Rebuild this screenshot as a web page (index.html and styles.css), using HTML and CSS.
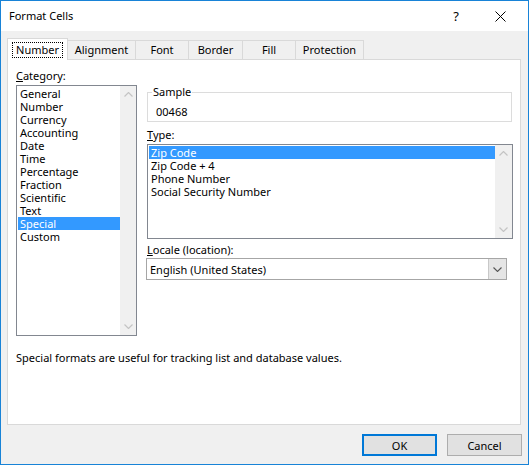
FILE: index.html
```html
<!DOCTYPE html>
<html>
<head>
<meta charset="utf-8">
<link rel="stylesheet" href="styles.css">
</head>
<body>
<div class="window">
  <div class="titlebar">
    <span class="title">Format Cells</span>
    <span class="spacer"></span>
    <div class="tbtn help">?</div>
    <div class="tbtn close">
      <svg width="11" height="11" viewBox="0 0 11 11"><path d="M0.5 0.5 L10.5 10.5 M10.5 0.5 L0.5 10.5" stroke="#000" stroke-width="1" fill="none"/></svg>
    </div>
  </div>
  <div class="body">
    <div class="tabs">
      <div class="tab active t-number"><span class="focus">Number</span></div>
      <div class="tab t-align">Alignment</div>
      <div class="tab t-font">Font</div>
      <div class="tab t-border">Border</div>
      <div class="tab t-fill">Fill</div>
      <div class="tab t-prot">Protection</div>
    </div>
    <div class="panel">
      <div class="cols">
        <div class="left">
          <div class="label"><u>C</u>ategory:</div>
          <div class="listbox cat">
            <div class="items">
              <div class="item">General</div>
              <div class="item">Number</div>
              <div class="item">Currency</div>
              <div class="item">Accounting</div>
              <div class="item">Date</div>
              <div class="item">Time</div>
              <div class="item">Percentage</div>
              <div class="item">Fraction</div>
              <div class="item">Scientific</div>
              <div class="item">Text</div>
              <div class="item sel">Special</div>
              <div class="item">Custom</div>
            </div>
            <div class="scroll s16">
              <div class="arrow"><svg width="9" height="5" viewBox="0 0 9 5"><polyline points="0.5,4.5 4.5,0.5 8.5,4.5" fill="none" stroke="#c4c4c4" stroke-width="1.2"/></svg></div>
              <div class="arrow"><svg width="9" height="5" viewBox="0 0 9 5"><polyline points="0.5,0.5 4.5,4.5 8.5,0.5" fill="none" stroke="#c4c4c4" stroke-width="1.2"/></svg></div>
            </div>
          </div>
        </div>
        <div class="right">
          <fieldset class="sample">
            <legend>Sample</legend>
            <div class="sample-val">00468</div>
          </fieldset>
          <div class="label gap5"><u>T</u>ype:</div>
          <div class="listbox type">
            <div class="items">
              <div class="item sel">Zip Code</div>
              <div class="item">Zip Code + 4</div>
              <div class="item">Phone Number</div>
              <div class="item">Social Security Number</div>
            </div>
            <div class="scroll s17">
              <div class="arrow"><svg width="9" height="5" viewBox="0 0 9 5"><polyline points="0.5,4.5 4.5,0.5 8.5,4.5" fill="none" stroke="#c4c4c4" stroke-width="1.2"/></svg></div>
              <div class="arrow"><svg width="9" height="5" viewBox="0 0 9 5"><polyline points="0.5,0.5 4.5,4.5 8.5,0.5" fill="none" stroke="#c4c4c4" stroke-width="1.2"/></svg></div>
            </div>
          </div>
          <div class="label gap3"><u>L</u>ocale (location):</div>
          <div class="combo">
            <span class="combo-text">English (United States)</span>
            <div class="combo-btn"><svg width="9" height="5" viewBox="0 0 9 5"><polyline points="0.5,0.5 4.5,4.5 8.5,0.5" fill="none" stroke="#555" stroke-width="1.1"/></svg></div>
          </div>
        </div>
      </div>
      <div class="desc">Special formats are useful for tracking list and database values.</div>
    </div>
    <div class="buttons">
      <button class="btn default">OK</button>
      <button class="btn">Cancel</button>
    </div>
  </div>
</div>
</body>
</html>
```

FILE: styles.css
```css
html, body {
  margin: 0;
  padding: 0;
  background: #fff;
}

.window {
  width: 529px;
  height: 465px;
  box-sizing: border-box;
  border: 1px solid #1883d7;
  background: #f0f0f0;
  display: flex;
  flex-direction: column;
  font-family: "Noto Sans", "Open Sans", sans-serif;
  font-size: 11px;
  color: #000;
}

.titlebar {
  height: 30px;
  background: #fff;
  display: flex;
  align-items: center;
  padding-left: 8px;
  padding-right: 6px;
  flex: none;
}

.title {
  font-size: 11px;
  line-height: 14px;
}

.spacer { flex: 1; }

.tbtn {
  width: 44px;
  height: 30px;
  display: flex;
  align-items: center;
  justify-content: center;
}

.help {
  font-size: 13px;
}

.body {
  flex: 1;
  display: flex;
  flex-direction: column;
  padding: 7px 7px 0 6px;
}

.tabs {
  display: flex;
  align-items: flex-end;
  height: 21px;
  flex: none;
}

.tab {
  box-sizing: border-box;
  height: 19px;
  border: 1px solid #d9d9d9;
  border-bottom: none;
  background: #f0f0f0;
  margin-left: -1px;
  display: flex;
  align-items: center;
  justify-content: center;
  line-height: 14px;
}

.tab.active {
  height: 22px;
  margin-left: 0;
  margin-bottom: -1px;
  background: #fff;
  position: relative;
  z-index: 1;
}

.focus {
  border: 1px dotted #000;
  padding: 0 3px;
  line-height: 14px;
}

.t-number { width: 61px; }
.t-align { width: 69px; }
.t-font { width: 54px; }
.t-border { width: 55px; }
.t-fill { width: 54px; }
.t-prot { width: 69px; }

.panel {
  box-sizing: border-box;
  height: 366px;
  background: #fff;
  border: 1px solid #d9d9d9;
  padding: 8px 0 0 8px;
  flex: none;
}

.cols {
  display: flex;
  gap: 10px;
}

.left {
  width: 121px;
}

.right {
  width: 366px;
}

.label {
  line-height: 15px;
  height: 15px;
}

.gap5 { margin-top: 5px; }
.gap3 { margin-top: 3px; }

.listbox {
  box-sizing: border-box;
  border: 1px solid #828790;
  display: flex;
  background: #fff;
  margin-top: 2px;
}

.listbox.cat {
  width: 121px;
  height: 251px;
}

.listbox.type {
  width: 366px;
  height: 95px;
}

.items {
  flex: 1;
  padding: 1px 0 0 1px;
}

.item {
  height: 13px;
  line-height: 13px;
  padding-left: 2px;
  white-space: nowrap;
}

.item.sel {
  background: #3399ff;
  color: #fff;
}

.scroll {
  background: #f0f0f0;
  display: flex;
  flex-direction: column;
  justify-content: space-between;
}

.s16 { width: 16px; }
.s17 { width: 17px; }

.arrow {
  height: 17px;
  display: flex;
  align-items: center;
  justify-content: center;
}

.sample {
  box-sizing: border-box;
  width: 365px;
  margin: 17px 0 0 0;
  padding: 0 0 2px 4px;
  border: 1px solid #dcdcdc;
  min-width: 0;
}

.sample legend {
  padding: 0 1px;
  line-height: 14px;
}

.sample-val {
  margin: 6px 0 0 4px;
  line-height: 14px;
}

.combo {
  box-sizing: border-box;
  width: 361px;
  height: 22px;
  margin: 1px 0 0 -1px;
  border: 1px solid #a6a6a6;
  display: flex;
  align-items: stretch;
  background: #fff;
}

.combo-text {
  flex: 1;
  padding-left: 3px;
  display: flex;
  align-items: center;
}

.combo-btn {
  width: 17px;
  background: #e5e5e5;
  border-left: 1px solid #c8c8c8;
  display: flex;
  align-items: center;
  justify-content: center;
}

.desc {
  margin-top: 14px;
  line-height: 15px;
}

.buttons {
  display: flex;
  justify-content: flex-end;
  gap: 10px;
  margin-top: 9px;
  margin-right: -1px;
}

.btn {
  box-sizing: border-box;
  width: 75px;
  height: 22px;
  background: #e1e1e1;
  border: 1px solid #adadad;
  font-family: "Noto Sans", "Open Sans", sans-serif;
  font-size: 11px;
  color: #000;
  padding: 0;
  margin: 0;
}

.btn.default {
  border: 2px solid #0078d7;
}
```
